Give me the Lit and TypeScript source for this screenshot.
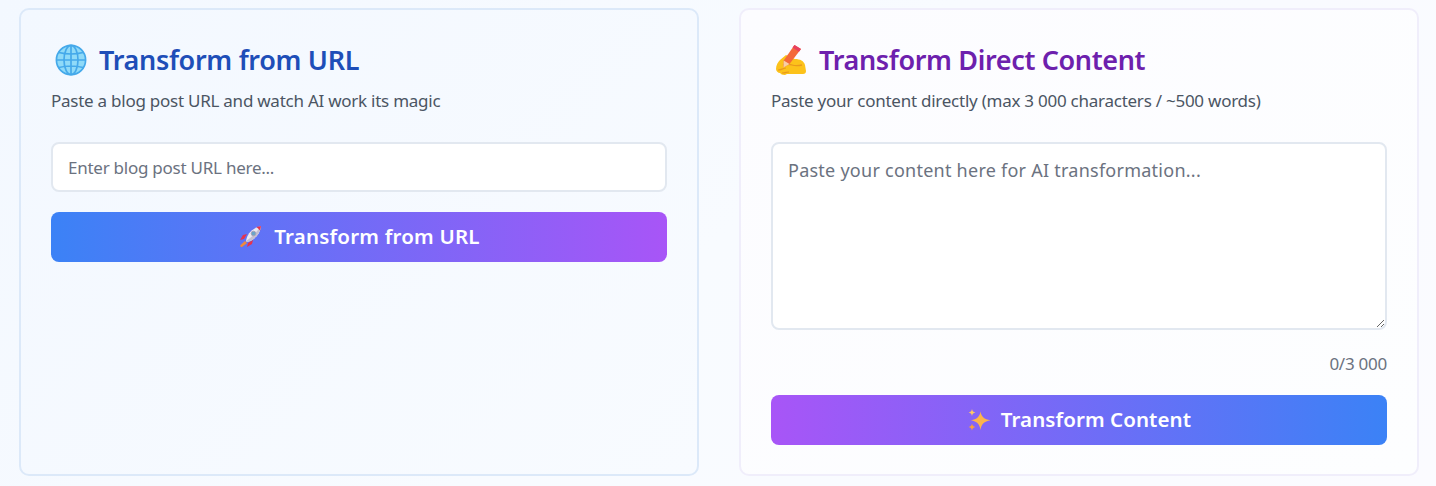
import { LitElement, html, css } from "lit";
import { customElement } from "lit/decorators.js";

const globe = html`<svg class="ico" viewBox="0 0 32 32" fill="none">
  <circle cx="16" cy="16" r="15" fill="#8fdaf8"/>
  <g stroke="#45a9ea" stroke-width="1.7">
    <circle cx="16" cy="16" r="14.6"/>
    <ellipse cx="16" cy="16" rx="7" ry="14.6"/>
    <path d="M16 1.4v29.2M1.4 16h29.2M3.800 8.500q12.200 3 24.400 0M3.800 23.500q12.200-3 24.400 0"/>
  </g>
</svg>`;

const writing = html`<svg class="ico" viewBox="0 0 32 32" fill="none">
  <path d="M1 25c0-4 2-7 4-9l6-5 6 3 3 1c5 0 9 2 10 6l1 6c0 2-1 3-3 3H12l-2 1c-3 0-4-1-5-2-2 0-4-2-4-4z" fill="#fcc21b"/>
  <path d="M8 21c3-1 6-1 9 0s6 1 10 0" stroke="#ea9a1c" stroke-width="1.300"/>
  <path d="M3 26c3 0 6-2 8-2M7 29c3 0 5-1 7-1" stroke="#ea9a1c" stroke-width="1.200"/>
  <path d="M19.500 1l6.500 4-11.500 15-6 3.500.2-7z" fill="#f4693a"/>
  <path d="M19.500 1l6.500 4-2 2.700-6.500-4.200z" fill="#e8405f"/>
  <path d="M8.700 16.500l5.800 3.500-6 3.500z" fill="#f8cfa6"/>
</svg>`;

const rocket = html`<svg class="ico-sm" viewBox="0 0 24 24" fill="none">
  <path d="M6 14L2 15l3-5 4-1z" fill="#e5344e"/>
  <path d="M10 18l-1 4 5-3 1-4z" fill="#e5344e"/>
  <path d="M8 16C9 9 14 3 23 1c-1 9-7 14-14 16z" fill="#ece9f1"/>
  <path d="M23 1c-1 9-7 14-14 16l-1-1C13 13 18 8 23 1z" fill="#c5c0d2"/>
  <path d="M18.500 1.900L23 1l-.9 4.600z" fill="#e5344e"/>
  <circle cx="15.500" cy="8.500" r="2.300" fill="#6aa6c8" stroke="#a9a3b8"/>
  <path d="M7 16l2 2-5 4c-1 .3-2-.5-1.700-1.700z" fill="#f08a3c"/>
</svg>`;

const sparkles = html`<svg class="ico-sm" viewBox="0 0 24 24">
  <path d="M13.500 3.500c1 5.500 3.500 7.500 10 8.800-6.500 1.300-9 3.500-10 9.700-1-6.200-3.500-8.400-9.500-9.700 6-1.300 8.500-3.300 9.500-8.800z" fill="#fdb44b"/>
  <path d="M5 1c.5 2.200 1.300 3 3.400 3.500C6.300 5 5.500 5.800 5 8 4.500 5.800 3.700 5 1.600 4.500 3.700 4 4.500 3.200 5 1z" fill="#fdc766"/>
  <path d="M5 15.500c.5 2.200 1.300 3 3.400 3.500-2.100.5-2.900 1.300-3.400 3.500-.5-2.200-1.300-3-3.400-3.500 2.100-.5 2.900-1.300 3.400-3.500z" fill="#fca03a"/>
</svg>`;

@customElement("app-root")
export class AppRoot extends LitElement {
  static styles = css`
    :host {
      display: block;
      width: 1436px;
      height: 486px;
      box-sizing: border-box;
      overflow: hidden;
      background: linear-gradient(135deg, #f3f8ff 0%, #f8fbff 50%, #fbfbff 100%);
      font-family: "Noto Sans", "Open Sans", sans-serif;
    }
    .grid {
      display: grid;
      grid-template-columns: 680px 680px;
      gap: 40px;
      padding: 8px 17px 0 19px;
    }
    .card {
      box-sizing: border-box;
      height: 468px;
      border-radius: 10px;
      padding: 30px;
      display: flex;
      flex-direction: column;
    }
    .card > * { flex: none; }
    .url {
      background: linear-gradient(135deg, #f3f8ff 0%, #f8fbff 100%);
      border: 2px solid #dce9f9;
    }
    .direct {
      background: linear-gradient(135deg, #fcfcff 0%, #fdfeff 100%);
      border: 2px solid #f0eefb;
    }
    h2 {
      margin: 0;
      height: 40px;
      display: flex;
      align-items: center;
      gap: 12px;
      padding-left: 4px;
      font-size: 27px;
      font-weight: 600;
      letter-spacing: -0.32px;
      line-height: 40px;
    }
    .url h2 { color: #1e4eb8; }
    .direct h2 { color: #6d20ad; letter-spacing: -0.36px; }
    .ico { width: 32px; height: 32px; flex: none; }
    .ico-sm { width: 24px; height: 24px; flex: none; }
    p {
      margin: 9px 0 29px;
      height: 24px;
      line-height: 24px;
      font-size: 17px;
      letter-spacing: -0.25px;
      color: #4b5563;
    }
    input, textarea {
      display: block;
      box-sizing: border-box;
      width: 100%;
      margin: 0;
      border: 2px solid #e2e8f0;
      border-radius: 8px;
      background: #fff;
      font-family: inherit;
      outline: none;
      color: #111827;
    }
    input::placeholder, textarea::placeholder { color: #6b7280; opacity: 1; }
    input {
      height: 50px;
      padding: 0 15px;
      font-size: 17px;
      letter-spacing: -0.25px;
    }
    textarea {
      height: 188px;
      padding: 13px 15px;
      font-size: 18px;
      line-height: 27px;
      letter-spacing: 0.25px;
      resize: vertical;
    }
    button {
      display: flex;
      align-items: center;
      justify-content: center;
      gap: 12px;
      width: 100%;
      height: 50px;
      border: 0;
      border-radius: 8px;
      color: #fff;
      font-family: inherit;
      font-size: 20.5px;
      font-weight: 600;
      letter-spacing: 0.2px;
      padding: 0;
    }
    button span { padding-bottom: 2px; }
    .field + button { margin-top: 20px; }
    .to-purple { background: linear-gradient(90deg, #3b82f6, #a855f7); }
    .to-blue { background: linear-gradient(90deg, #a855f7, #3b82f6); gap: 10px; letter-spacing: 0.08px; }
    .count {
      margin: 22px 0 19px;
      height: 24px;
      line-height: 24px;
      text-align: right;
      font-size: 17px;
      letter-spacing: -0.25px;
      color: #6b7280;
    }
  `;

  render() {
    return html`
      <div class="grid">
        <section class="card url">
          <h2>${globe}<span>Transform from URL</span></h2>
          <p>Paste a blog post URL and watch AI work its magic</p>
          <input class="field" type="text" placeholder="Enter blog post URL here..." />
          <button class="to-purple">${rocket}<span>Transform from URL</span></button>
        </section>
        <section class="card direct">
          <h2>${writing}<span>Transform Direct Content</span></h2>
          <p>Paste your content directly (max 3 000 characters / ~500 words)</p>
          <textarea placeholder="Paste your content here for AI transformation..."></textarea>
          <div class="count">0/3 000</div>
          <button class="to-blue">${sparkles}<span>Transform Content</span></button>
        </section>
      </div>
    `;
  }
}
